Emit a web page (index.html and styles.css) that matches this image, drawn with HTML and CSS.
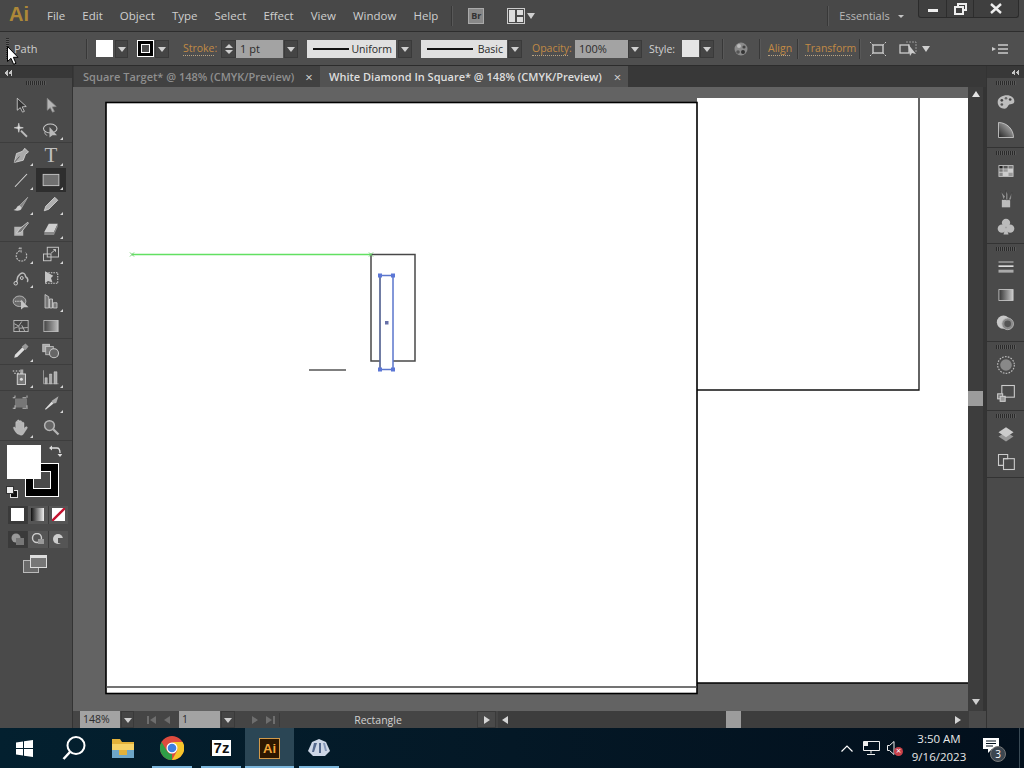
FILE: index.html
```html
<!DOCTYPE html>
<html lang="en">
<head>
    <meta charset="UTF-8">
    <title>White Diamond In Square* @ 148% (CMYK/Preview)</title>
    <link rel="stylesheet" href="styles.css">
</head>
<body>
<div class="app">
    <header class="menubar">
        <span class="ai-logo">Ai</span>
        <nav class="menu">
            <span>File</span><span>Edit</span><span>Object</span><span>Type</span><span>Select</span><span>Effect</span><span>View</span><span>Window</span><span>Help</span>
        </nav>
        <i class="vsep menu-sep"></i>
        <span class="br-icon">Br</span>
        <svg class="arrange-icon" width="18" height="16" viewBox="0 0 18 16"><rect x=".5" y=".5" width="17" height="15" fill="#4a4a4a" stroke="#ccc"/><path d="M2 2h6v12H2zM10 2h6v5h-6zM10 9h6v5h-6z" fill="#ddd"/></svg>
        <i class="tri arrange-tri"></i>
        <i class="vsep essentials-sep"></i>
        <span class="essentials">Essentials</span>
        <i class="tri-small"></i>
        <div class="window-btns">
            <span class="win-btn win-min"><i></i></span>
            <span class="win-btn win-max"><svg width="13" height="12" viewBox="0 0 13 12"><path d="M4 3V1h8v6h-3M1 4h8v7H1z" fill="none" stroke="#eee" stroke-width="2"/></svg></span>
            <span class="win-btn win-close"><svg width="12" height="11" viewBox="0 0 12 11"><path d="M1 1l10 9M11 1L1 10" stroke="#eee" stroke-width="2.4"/></svg></span>
        </div>
    </header>

    <div class="controlbar">
        <i class="grip-v"></i>
        <span class="path-label">Path</span>
        <i class="vsep"></i>
        <span class="swatch fill-swatch"></span>
        <span class="dd dd-fill"></span>
        <span class="stroke-swatch"><i></i></span>
        <span class="dd dd-stroke"></span>
        <span class="link-label stroke-label">Stroke:</span>
        <span class="spinner"><i class="up"></i><i class="down"></i></span>
        <span class="input stroke-input">1 pt</span>
        <span class="dd dd-weight"></span>
        <span class="line-box uniform-box"><i class="line-sample"></i>Uniform</span>
        <span class="dd dd-uniform"></span>
        <span class="line-box basic-box"><i class="line-sample"></i>Basic</span>
        <span class="dd dd-basic"></span>
        <span class="link-label opacity-label">Opacity:</span>
        <span class="input opacity-input">100%</span>
        <span class="dd dd-opacity"></span>
        <span class="style-label">Style:</span>
        <span class="swatch style-swatch"></span>
        <span class="dd dd-style"></span>
        <i class="vsep sep-a"></i>
        <svg class="globe" width="14" height="14" viewBox="0 0 14 14"><circle cx="7" cy="7" r="6.5" fill="#8b8b8b"/><circle cx="5" cy="4" r="2" fill="#bbb"/><circle cx="10" cy="5" r="1.6" fill="#444"/><circle cx="4" cy="10" r="1.8" fill="#555"/><circle cx="9" cy="10" r="2" fill="#333"/></svg>
        <i class="vsep sep-b"></i>
        <span class="link-label align-label">Align</span>
        <i class="vsep sep-c"></i>
        <span class="link-label transform-label">Transform</span>
        <i class="vsep sep-c"></i>
        <svg class="iso-a" width="18" height="16" viewBox="0 0 18 16" fill="none" stroke="#ccc"><rect x="4" y="4" width="10" height="8" stroke-width="1.4"/><path d="M1 1l3 3M17 1l-3 3M1 15l3-3M17 15l-3-3" stroke-dasharray="1.5 1"/></svg>
        <svg class="iso-b" width="18" height="16" viewBox="0 0 18 16"><rect x="1" y="4" width="9" height="8" fill="none" stroke="#ccc" stroke-width="1.3"/><path d="M7 1h10v10" fill="none" stroke="#999" stroke-dasharray="2 1"/><path d="M9 3l2 12 2-3 4 1z" fill="#ccc"/></svg>
        <i class="tri iso-tri"></i>
        <svg class="panel-menu" width="16" height="10" viewBox="0 0 16 10"><path d="M0 3l4 2-4 2z" fill="#ccc"/><path d="M6 1h10M6 5h10M6 9h10" stroke="#ccc" stroke-width="1.4"/></svg>
    </div>

    <div class="workspace">
        <aside class="toolbar">
            <div class="collapse-strip"><span class="chevrons"></span></div>
            <div class="grip-h"></div>
            <div class="tool-group first">
                <span class="tool"><svg viewBox="0 0 24 24"><path d="M7 3v16l4-3.5 3 6 2.5-1-3-6 5.5-.5z" fill="#333" stroke="#ddd"/></svg></span>
                <span class="tool"><svg viewBox="0 0 24 24"><path d="M7 3v16l4-3.5 3 6 2.5-1-3-6 5.5-.5z" fill="#b5b5b5" stroke="#888"/></svg></span>
                <span class="tool"><svg viewBox="0 0 24 24"><path d="M12 13l8 8" stroke="#bbb" stroke-width="2.4"/><path d="M9 3l1 5 5 1-5 1-1 5-1-5-5-1 5-1z" fill="#e2e2e2" stroke="#ccc"/></svg></span>
                <span class="tool more"><svg viewBox="0 0 24 24"><ellipse cx="11" cy="10" rx="9" ry="6" fill="none" stroke="#ccc" stroke-width="1.4"/><path d="M4 14c-1 3 1 5 3 5" fill="none" stroke="#ccc"/><path d="M10 8v14l4-3h6z" fill="#b9b9b9"/></svg></span>
            </div>
            <div class="tool-group">
                <span class="tool more"><svg viewBox="0 0 24 24"><path d="M17 3l5 5-4 3-3 8-12 3 3-12 8-3z" fill="#aaa" stroke="#ddd"/><path d="M3 22l7-8" stroke="#444"/></svg></span>
                <span class="tool more"><span class="type-t">T</span></span>
                <span class="tool more"><svg viewBox="0 0 24 24"><path d="M4 21L20 4" stroke="#d8d8d8" stroke-width="1.4"/></svg></span>
                <span class="tool more active"><svg viewBox="0 0 24 24"><rect x="1.500" y="4.500" width="21" height="15" fill="#707070" stroke="#c8c8c8" stroke-width="1.200"/></svg></span>
                <span class="tool more"><svg viewBox="0 0 24 24"><path d="M21 3L10 14l3 3z" fill="#888" stroke="#aaa"/><path d="M10 14c-4 0-3 5-8 6 5 2 11 1 11-3z" fill="#ccc"/></svg></span>
                <span class="tool more"><svg viewBox="0 0 24 24"><path d="M17 3l4 4L9 19l-6 2 2-6z" fill="#b0b0b0" stroke="#ddd"/></svg></span>
                <span class="tool"><svg viewBox="0 0 24 24"><path d="M3 9h12v12H3z" fill="#b5b5b5"/><path d="M21 3L11 11c-2 2-3 5-5 6 4 1 7-1 8-3l8-10z" fill="#777" stroke="#ddd"/></svg></span>
                <span class="tool more"><svg viewBox="0 0 24 24"><path d="M9 5h12l-5 11H3z" fill="#cfcfcf"/><path d="M3 16h13v4H3zM16 16l5-11v4l-5 11z" fill="#888"/></svg></span>
            </div>
            <div class="tool-group">
                <span class="tool more"><svg viewBox="0 0 24 24"><path d="M9 5l3-2v6l-2-1a7 7 0 1 0 8 2" fill="none" stroke="#bbb" stroke-width="1.6" stroke-dasharray="2.4 1.4"/></svg></span>
                <span class="tool more"><svg viewBox="0 0 24 24" fill="none" stroke="#ccc" stroke-width="1.2"><rect x="2" y="12" width="10" height="9"/><rect x="7" y="3" width="15" height="13"/><path d="M12 11l6-5M15 6h3v3"/></svg></span>
                <span class="tool more"><svg viewBox="0 0 24 24"><path d="M5 18c3-2 1-5 3-8s5-6 8-4 1 4 3 5 3 5 1 6" fill="none" stroke="#bbb" stroke-width="2"/><circle cx="5" cy="19" r="2.4" fill="#555" stroke="#eee"/><circle cx="13" cy="12" r="2" fill="#555" stroke="#eee"/></svg></span>
                <span class="tool"><svg viewBox="0 0 24 24"><rect x="5" y="5" width="16" height="14" fill="none" stroke="#ccc" stroke-dasharray="2 1.4" stroke-width="1.4"/><path d="M4 3v16l4-3 6 2-2-6 3-3z" fill="#c4c4c4"/></svg></span>
                <span class="tool"><svg viewBox="0 0 24 24"><ellipse cx="10" cy="11" rx="8.5" ry="7" fill="#6a6a6a" stroke="#ccc"/><path d="M4 11h10" stroke="#eee" stroke-dasharray="2 1"/><path d="M12 9v13l4-3h6z" fill="#c4c4c4"/></svg></span>
                <span class="tool more"><svg viewBox="0 0 24 24"><path d="M4 2l5 3v15H4zM10 8h4v12h-4zM15 13h5v7h-5z" fill="#777" stroke="#d5d5d5"/></svg></span>
                <span class="tool"><svg viewBox="0 0 24 24" fill="none" stroke="#d0d0d0"><rect x="2.5" y="4.5" width="19" height="15" fill="#444"/><path d="M3 9l6 3 4-6M9 12l1 7M10 15l11-1M13 11l4 8M3 15l5-2"/></svg></span>
                <span class="tool"><svg viewBox="0 0 24 24"><defs><linearGradient id="g1"><stop offset="0" stop-color="#444"/><stop offset="1" stop-color="#bbb"/></linearGradient></defs><rect x="2.5" y="4.5" width="19" height="15" fill="url(#g1)" stroke="#c8c8c8"/></svg></span>
            </div>
            <div class="tool-group">
                <span class="tool more"><svg viewBox="0 0 24 24"><path d="M3 21l1-4L14 7l3 3L7 20z" fill="#ddd"/><path d="M13 6l5-4 4 4-4 5z" fill="#999"/></svg></span>
                <span class="tool"><svg viewBox="0 0 24 24"><rect x="1" y="3" width="9" height="10" fill="#aaa" stroke="#ccc"/><rect x="5" y="6" width="10" height="11" fill="#777" stroke="#ccc"/><circle cx="16" cy="15" r="6" fill="#666" stroke="#ccc" stroke-width="1.4"/></svg></span>
            </div>
            <div class="tool-group">
                <span class="tool more"><svg viewBox="0 0 24 24"><path d="M1 4h2M5 4h2M9 4h2M3 7h2M7 7h2M11 7h2" stroke="#ddd" stroke-width="1.6"/><path d="M11 2h4v6h-4z" fill="#aaa"/><rect x="7" y="8" width="11" height="14" fill="#777" stroke="#ddd" stroke-width="1.2"/><circle cx="12.5" cy="15" r="2" fill="#ddd"/></svg></span>
                <span class="tool more"><svg viewBox="0 0 24 24"><path d="M2 3v18h20" fill="none" stroke="#aaa"/><path d="M4 13h3v8H4zM10 8h3v13h-3zM16 5h4v16h-4z" fill="#aaa" stroke="#ddd" stroke-width=".6"/></svg></span>
            </div>
            <div class="tool-group">
                <span class="tool"><svg viewBox="0 0 24 24"><rect x="4" y="6" width="16" height="12" fill="#777"/><path d="M1 5h21M1 19h21M4 2v20M20 2v20" stroke="#ddd" stroke-dasharray="5 10" stroke-dashoffset="2"/></svg></span>
                <span class="tool more"><svg viewBox="0 0 24 24"><path d="M22 3l-3 9-5 1-1-4z" fill="#aaa"/><path d="M13 10l-9 10 1 1 10-8z" fill="#ddd"/></svg></span>
                <span class="tool more"><svg viewBox="0 0 24 24"><path d="M7 21c-2-2-5-6-5-8s2-1 3 1V6c0-2 2-2 2 0V4c0-2 3-2 3 0v1c0-2 3-2 3 0v2c0-2 3-2 3 0v7l2-2c2-1 3 0 2 2l-4 6c-1 2-2 3-4 3z" fill="#b5b5b5" stroke="#ddd" stroke-width=".5"/></svg></span>
                <span class="tool"><svg viewBox="0 0 24 24"><circle cx="10" cy="10" r="6.5" fill="#666" stroke="#b5b5b5" stroke-width="2"/><path d="M15 15l7 7" stroke="#b5b5b5" stroke-width="3"/></svg></span>
            </div>
            <div class="fill-stroke">
                <span class="big-stroke"><i></i></span>
                <span class="big-fill"></span>
                <svg class="swap" width="14" height="14" viewBox="0 0 14 14" fill="none" stroke="#ddd" stroke-width="1.3"><path d="M3 4h6c2 0 3 2 3 5"/><path d="M1 4l3-2.500v5zM12 13l-2.500-3h5z" fill="#ddd" stroke="none"/></svg>
                <svg class="defaults" width="12" height="12" viewBox="0 0 12 12"><rect x="4.500" y="4.500" width="7" height="7" fill="#111" stroke="#ddd"/><rect x=".5" y=".5" width="7" height="7" fill="#eee" stroke="#333"/></svg>
            </div>
            <div class="color-row">
                <span class="mode-btn on"><i class="mode-white"></i></span>
                <span class="mode-btn"><i class="mode-grad"></i></span>
                <span class="mode-btn"><svg width="13" height="13" viewBox="0 0 13 13"><rect width="13" height="13" fill="#fff"/><path d="M0 13L13 0" stroke="#c4122f" stroke-width="2.400"/></svg></span>
            </div>
            <div class="draw-row">
                <span class="draw-btn on"><svg width="14" height="12" viewBox="0 0 14 12"><circle cx="5" cy="5" r="4.500" fill="#999"/><rect x="5" y="5" width="8" height="7" fill="#777"/></svg></span>
                <span class="draw-btn"><svg width="14" height="12" viewBox="0 0 14 12"><circle cx="6" cy="5" r="4.500" fill="none" stroke="#ccc" stroke-width="1.400"/><rect x="7" y="6" width="6" height="5" fill="#999"/></svg></span>
                <span class="draw-btn"><svg width="14" height="12" viewBox="0 0 14 12"><circle cx="7" cy="6" r="5" fill="#ccc"/><rect x="7" y="5" width="5" height="5" fill="#555"/></svg></span>
            </div>
            <div class="screen-mode">
                <svg width="24" height="18" viewBox="0 0 24 18"><rect x=".5" y="5.500" width="15" height="12" fill="#6a6a6a" stroke="#bbb"/><rect x="7.500" y=".5" width="16" height="12" fill="#777" stroke="#ddd"/><path d="M8 1h15v2H8z" fill="#ddd"/></svg>
            </div>
        </aside>

        <main class="document">
            <div class="tabs">
                <div class="tab tab-back"><span>Square Target* @ 148% (CMYK/Preview)</span><b class="tab-x">&times;</b></div>
                <div class="tab tab-front"><span>White Diamond In Square* @ 148% (CMYK/Preview)</span><b class="tab-x">&times;</b></div>
            </div>
            <div class="canvas-row">
                <svg class="canvas" viewBox="73 87 895 624" width="895" height="624">
                    <rect x="697" y="98" width="271" height="585" fill="#fff"/>
                    <path d="M697 683H968" stroke="#000" stroke-width="1.500"/>
                    <path d="M697 390H919V98" fill="none" stroke="#111" stroke-width="1.300"/>
                    <rect x="106" y="102.500" width="591" height="591" fill="#fff" stroke="#000" stroke-width="1.600"/>
                    <path d="M106 687H697" stroke="#444" stroke-width="1.500"/>
                    <path d="M371 254.500H415V361H371Z" fill="none" stroke="#484848" stroke-width="1.500"/>
                    <path d="M309 370H346" stroke="#555" stroke-width="1.400"/>
                    <rect x="380" y="275.500" width="13" height="94" fill="#fff" stroke="#5b76cc" stroke-width="1.500"/>
                    <path d="M380 276V369" stroke="#555" stroke-width=".8"/>
                    <path d="M132 254.500H371" stroke="#62e062" stroke-width="1.300"/>
                    <path d="M130 252.500l4 4M134 252.500l-4 4M369 252.500l4 4M373 252.500l-4 4" stroke="#6fcf6f"/>
                    <g fill="#5b76d6">
                        <rect x="378" y="273.500" width="4" height="4"/>
                        <rect x="391" y="273.500" width="4" height="4"/>
                        <rect x="378" y="367.500" width="4" height="4"/>
                        <rect x="391" y="367.500" width="4" height="4"/>
                        <rect x="385" y="321" width="3.500" height="3.500" fill="#6670a8"/>
                    </g>
                </svg>
                <div class="vscroll">
                    <i class="tri-up"></i>
                    <span class="vthumb"></span>
                    <i class="tri vscroll-down"></i>
                </div>
            </div>
            <div class="statusbar">
                <span class="input zoom-input">148%</span>
                <span class="dd dd-zoom"></span>
                <svg class="nav-first" width="28" height="10" viewBox="0 0 28 10" fill="#6e6e6e"><path d="M1 1h2v8H1zM10 1v8L4 5zM24 1v8l-6-4z"/></svg>
                <span class="input page-input">1</span>
                <span class="dd dd-page"></span>
                <svg class="nav-next" width="28" height="10" viewBox="0 0 28 10" fill="#6e6e6e"><path d="M4 1v8l6-4zM18 1v8l6-4zM25 1h2v8h-2z"/></svg>
                <span class="status-label">Rectangle</span>
                <span class="status-arrow"><i class="tri-right"></i></span>
                <div class="hscroll">
                    <i class="tri-left"></i>
                    <span class="hthumb"></span>
                    <i class="tri-right hscroll-right"></i>
                </div>
                <span class="scroll-corner"></span>
            </div>
        </main>

        <aside class="dock">
            <div class="collapse-strip dock-strip"><span class="chevrons"></span></div>
            <div class="dock-group">
                <div class="grip-h dock-grip"></div>
                <span class="dock-icon"><svg viewBox="0 0 24 24"><path d="M2 12c0-5 6-8 11-8s9 3 9 7-4 3-6 4-2 5-6 5-8-3-8-8z" fill="#bdbdbd"/><circle cx="7" cy="10" r="1.600" fill="#444"/><circle cx="12" cy="7.500" r="1.600" fill="#666"/><circle cx="17" cy="9" r="1.600" fill="#444"/><circle cx="7" cy="15" r="1.600" fill="#555"/></svg></span>
                <span class="dock-icon"><svg viewBox="0 0 24 24"><defs><linearGradient id="g2" x1="0" y1="1" x2="1" y2="0"><stop offset="0" stop-color="#222"/><stop offset="1" stop-color="#ccc"/></linearGradient></defs><path d="M3 3c10 0 18 8 18 18H3z" fill="url(#g2)" stroke="#ccc"/></svg></span>
            </div>
            <div class="dock-group">
                <div class="grip-h dock-grip"></div>
                <span class="dock-icon"><svg viewBox="0 0 24 24"><rect x="3" y="5" width="18" height="14" fill="#ccc"/><path d="M4 6h4v3H4z" fill="#222"/><path d="M9 6h5v3H9z" fill="#555"/><path d="M15 6h5v3h-5zM4 10h4v3H4z" fill="#777"/><path d="M9 10h5v3H9zM15 14h5v4h-5z" fill="#999"/><path d="M4 14h4v4H4z" fill="#888"/></svg></span>
                <span class="dock-icon"><svg viewBox="0 0 24 24"><path d="M7 13h10v9H7z" fill="#bbb"/><path d="M9 13L6 3l5 6zM12 13V2l2 4v7zM15 13l4-9-1 9z" fill="#999" stroke="#333" stroke-width=".5"/></svg></span>
                <span class="dock-icon"><svg viewBox="0 0 24 24"><circle cx="12" cy="7" r="5" fill="#bbb"/><circle cx="7" cy="14" r="5" fill="#bbb"/><circle cx="17" cy="14" r="5" fill="#bbb"/><path d="M11 14h2l2 7H9z" fill="#bbb"/></svg></span>
            </div>
            <div class="dock-group">
                <div class="grip-h dock-grip"></div>
                <span class="dock-icon"><svg viewBox="0 0 24 24"><path d="M3 6h18" stroke="#ddd"/><path d="M3 11h18" stroke="#ddd" stroke-width="2"/><path d="M3 17h18" stroke="#aaa" stroke-width="3.500"/></svg></span>
                <span class="dock-icon"><svg viewBox="0 0 24 24"><defs><linearGradient id="g3"><stop offset="0" stop-color="#333"/><stop offset="1" stop-color="#ccc"/></linearGradient></defs><rect x="3.500" y="5.500" width="17" height="13" fill="url(#g3)" stroke="#ccc"/></svg></span>
                <span class="dock-icon"><svg viewBox="0 0 24 24"><circle cx="9" cy="11" r="8" fill="#c8c8c8"/><circle cx="14" cy="13" r="7" fill="#888" stroke="#bbb"/><circle cx="14" cy="13" r="4" fill="#555"/></svg></span>
            </div>
            <div class="dock-group">
                <div class="grip-h dock-grip"></div>
                <span class="dock-icon"><svg viewBox="0 0 24 24"><circle cx="12" cy="12" r="10" fill="none" stroke="#bbb" stroke-dasharray="2 1.500" stroke-width="1.400"/><circle cx="12" cy="12" r="7" fill="#888"/></svg></span>
                <span class="dock-icon"><svg viewBox="0 0 24 24" fill="none" stroke="#ccc" stroke-width="1.300"><rect x="7" y="3" width="15" height="14"/><rect x="2" y="13" width="6" height="6" fill="#777"/><rect x="5" y="16" width="6" height="6" fill="#999"/></svg></span>
            </div>
            <div class="dock-group">
                <div class="grip-h dock-grip"></div>
                <span class="dock-icon"><svg viewBox="0 0 24 24"><path d="M3 15l9-5 9 5-9 6z" fill="#999"/><path d="M3 10l9-6 9 6-9 6z" fill="#ccc"/></svg></span>
                <span class="dock-icon"><svg viewBox="0 0 24 24" fill="none" stroke="#ccc" stroke-width="1.300"><path d="M3 3h11v5H9v8H3z"/><rect x="9" y="8" width="13" height="13"/></svg></span>
            </div>
        </aside>
    </div>

    <footer class="taskbar">
        <span class="task-item"><svg width="17" height="17" viewBox="0 0 17 17" fill="#fff"><path d="M0 2.500l7-1v6.500H0zM8 1.300l9-1.300v8H8zM0 9h7v6.500l-7-1zM8 9h9v8l-9-1.300z"/></svg></span>
        <span class="task-item"><svg width="24" height="24" viewBox="0 0 24 24" fill="none" stroke="#fff"><circle cx="14" cy="9.500" r="8.500" stroke-width="2"/><path d="M8 16L1.500 23" stroke-width="2.500"/></svg></span>
        <span class="task-item"><svg width="22" height="20" viewBox="0 0 22 20"><path d="M0 1h8l2 3h12v16H0z" fill="#e3b23a"/><path d="M0 6h22v14H0z" fill="#f6d267"/><path d="M0 12h22v8H0z" fill="#6ea7c8"/><rect x="7" y="12" width="8" height="5" fill="#e3b23a"/></svg></span>
        <span class="task-item running"><svg width="24" height="24" viewBox="0 0 24 24"><circle cx="12" cy="12" r="12" fill="#dd4b3e"/><path d="M12 24A12 12 0 0 1 1.600 6L7 15c1 2 3 3 5 3z" fill="#2f9e47"/><path d="M12 6h10.600A12 12 0 0 1 12 24l5-9c1-3 0-7-5-9z" fill="#f7c52b"/><circle cx="12" cy="12" r="5.500" fill="#fff"/><circle cx="12" cy="12" r="4.300" fill="#3f7fe0"/></svg></span>
        <span class="task-item running"><span class="sevenz">7z</span></span>
        <span class="task-item running current"><span class="ai-box">Ai</span></span>
        <span class="task-item running"><svg width="22" height="18" viewBox="0 0 22 18"><path d="M4 3l7-3 7 3 4 9-5 5H5l-5-5z" fill="#cdd6e6"/><path d="M6 4h3l-3 9H4zM11 4h2v10h-2z" fill="#54688c"/><path d="M15 4h2l2 8h-2z" fill="#8497b8"/></svg></span>
        <div class="tray">
            <svg width="12" height="7" viewBox="0 0 12 7" fill="none" stroke="#fff" stroke-width="1.200"><path d="M.5 6.500L6 1l5.500 5.500"/></svg>
            <svg class="tray-net" width="17" height="14" viewBox="0 0 17 14" fill="none" stroke="#eee"><path d="M.5.500h16v9H.5zM8 9.500v3M4 13.500h8"/><rect x="1.500" y="1.500" width="3" height="3" fill="#eee"/></svg>
            <span class="tray-vol"><svg width="10" height="14" viewBox="0 0 10 14" fill="none" stroke="#eee"><path d="M.5 4.500h2L7 .5v13l-4.500-4h-2z"/></svg><i class="vol-x">&times;</i></span>
            <div class="clock"><span>3:50 AM</span><span>9/16/2023</span></div>
            <span class="notify"><svg width="16" height="15" viewBox="0 0 16 15"><path d="M0 0h16v11H9l-4 4v-4H0z" fill="#fff"/><path d="M3 3h10M3 5.500h10M3 8h7" stroke="#04131f"/></svg><i class="notify-badge">3</i></span>
        </div>
    </footer>
    <svg class="cursor" width="12" height="19" viewBox="0 0 12 19"><path d="M.5.500v15l3.500-3.200 2.600 6 2.400-1-2.600-6h4.600z" fill="#fff" stroke="#000"/></svg>
</div>
</body>
</html>
```

FILE: styles.css
```css
* {
    box-sizing: border-box;
}

body {
    margin: 0;
    background: #4a4a4a;
    font-family: "Open Sans", "Noto Sans", sans-serif;
    font-size: 11px;
    color: #d2d2d2;
    overflow: hidden;
}

i {
    font-style: normal;
}

.app {
    position: relative;
    width: 1024px;
    height: 768px;
    display: flex;
    flex-direction: column;
}

/* top menu */
.menubar {
    height: 32px;
    display: flex;
    align-items: center;
    background: #484848;
    border-bottom: 1px solid #2e2e2e;
    flex: none;
}

.ai-logo {
    width: 47px;
    padding-left: 9px;
    font-family: "Liberation Sans", sans-serif;
    font-size: 20px;
    font-weight: 700;
    color: #ad8838;
    line-height: 1;
    margin-top: -4px;
    flex: none;
}

.menu {
    display: flex;
    gap: 17.1px;
    font-size: 11.5px;
    color: #cfcfcf;
    flex: none;
}

.vsep {
    display: block;
    width: 1px;
    height: 20px;
    background: #383838;
    border-right: 1px solid #585858;
    box-sizing: content-box;
    flex: none;
}

.menu-sep {
    margin-left: 13px;
}

.br-icon {
    width: 16px;
    height: 16px;
    margin-left: 15px;
    background: #888;
    border: 1px solid #aaa;
    color: #333;
    font-size: 9px;
    font-weight: 700;
    text-align: center;
    line-height: 14px;
    flex: none;
}

.arrange-icon {
    margin-left: 23px;
    flex: none;
}

.tri {
    display: block;
    width: 0;
    height: 0;
    border-left: 4px solid transparent;
    border-right: 4px solid transparent;
    border-top: 6px solid #cfcfcf;
    flex: none;
}

.arrange-tri {
    margin-left: 2px;
}

.essentials-sep {
    margin-left: 292px;
}

.essentials {
    width: 50px;
    margin-left: 10px;
    font-size: 11px;
    color: #b9b9b9;
    white-space: nowrap;
    flex: none;
}

.tri-small {
    width: 0;
    height: 0;
    margin: 2px 0 0 9px;
    border-left: 3px solid transparent;
    border-right: 3px solid transparent;
    border-top: 3px solid #c4c4c4;
    flex: none;
}

.window-btns {
    display: flex;
    align-self: flex-start;
    height: 18px;
    margin-left: 14px;
    background: #3f3f3f;
    border: 1px solid #2b2b2b;
    border-top: 0;
    border-radius: 0 0 3px 3px;
    flex: none;
}

.win-btn {
    display: flex;
    align-items: center;
    justify-content: center;
    border-right: 1px solid #2d2d2d;
}

.win-min {
    width: 28px;
}

.win-min i {
    width: 10px;
    height: 3px;
    margin-top: 3px;
    background: #eee;
}

.win-max {
    width: 27px;
}

.win-close {
    width: 44px;
    border-right: 0;
}

/* control bar */
.controlbar {
    position: relative;
    height: 34px;
    display: flex;
    align-items: center;
    padding-left: 6px;
    background: #4f4f4f;
    border-bottom: 1px solid #2c2c2c;
    flex: none;
}

.grip-v {
    width: 3px;
    height: 22px;
    background: repeating-linear-gradient(#2a2a2a 0 1px, #5c5c5c 1px 2px);
}

.path-label {
    width: 72px;
    margin-left: 5px;
    color: #d0d0d0;
}

.swatch {
    width: 17px;
    height: 17px;
    background: #fff;
    flex: none;
}

.fill-swatch {
    margin-left: 8px;
}

.dd {
    position: relative;
    display: block;
    width: 14px;
    height: 18px;
    background: #454545;
    border: 1px solid #3a3a3a;
    flex: none;
}

.dd::after {
    content: "";
    position: absolute;
    left: 2px;
    top: 6px;
    border-left: 4px solid transparent;
    border-right: 4px solid transparent;
    border-top: 5px solid #cfcfcf;
}

.dd-fill {
    width: 13px;
    margin-left: 2px;
}

.stroke-swatch {
    width: 17px;
    height: 17px;
    margin-left: 9px;
    padding: 2px;
    background: #000;
    border: 1px solid #fff;
    flex: none;
}

.stroke-swatch i {
    display: block;
    width: 9px;
    height: 9px;
    margin: 1px;
    background: #4f4f4f;
    border: 1.5px solid #fff;
}

.dd-stroke,
.dd-weight,
.dd-basic,
.dd-style {
    margin-left: 1px;
}

.link-label {
    flex: none;
    color: #c18a45;
    border-bottom: 1px dotted #b9a383;
    line-height: 13px;
    white-space: nowrap;
    font-size: 10.5px;
}

.stroke-label {
    width: 31px;
    margin-left: 14px;
}

.spinner {
    width: 15px;
    height: 18px;
    margin-left: 7px;
    display: flex;
    flex-direction: column;
    align-items: center;
    justify-content: space-around;
    padding: 2px 0;
    background: #454545;
    border: 1px solid #3a3a3a;
    flex: none;
}

.spinner .up {
    border-left: 4px solid transparent;
    border-right: 4px solid transparent;
    border-bottom: 4px solid #ccc;
}

.spinner .down {
    border-left: 4px solid transparent;
    border-right: 4px solid transparent;
    border-top: 4px solid #ccc;
}

.input {
    height: 18px;
    padding-left: 4px;
    background: #a3a3a3;
    color: #2c2c2c;
    line-height: 18px;
    flex: none;
}

.stroke-input {
    width: 47px;
}

.line-box {
    height: 18px;
    display: flex;
    align-items: center;
    justify-content: space-between;
    padding: 0 4px 0 6px;
    background: #e0e0e0;
    color: #2a2a2a;
    font-size: 10.5px;
    flex: none;
}

.line-sample {
    display: block;
    height: 2px;
    background: #111;
}

.uniform-box {
    width: 89px;
    margin-left: 9px;
}

.uniform-box .line-sample {
    width: 36px;
}

.dd-uniform {
    margin-left: 2px;
}

.basic-box {
    width: 86px;
    margin-left: 9px;
}

.basic-box .line-sample {
    width: 46px;
}

.opacity-label {
    width: 36px;
    margin-left: 10px;
}

.opacity-input {
    width: 53px;
    margin-left: 7px;
}

.style-label {
    width: 25px;
    margin-left: 7px;
    font-size: 10.5px;
    flex: none;
}

.style-swatch {
    margin-left: 8px;
    background: #e4e4e4;
}

.sep-a {
    margin-left: 8px;
}

.globe {
    margin-left: 10px;
    flex: none;
}

.sep-b {
    margin-left: 11px;
}

.align-label {
    width: 22px;
    margin-left: 7px;
}

.sep-c {
    margin-left: 7px;
}

.transform-label {
    width: 47px;
    margin-left: 6px;
}

.iso-a {
    margin-left: 8px;
    flex: none;
}

.iso-b {
    margin-left: 12px;
    flex: none;
}

.iso-tri {
    margin-left: 5px;
}

.panel-menu {
    margin-left: auto;
    margin-right: 16px;
    flex: none;
}

/* main area */
.workspace {
    flex: 1;
    min-height: 0;
    display: flex;
}

.toolbar {
    width: 73px;
    background: #4a4a4a;
    border-right: 1px solid #333;
    flex: none;
}

.collapse-strip {
    height: 12px;
    display: flex;
    align-items: center;
    padding-left: 5px;
    background: #383838;
}

.chevrons {
    width: 7px;
    height: 7px;
    background: linear-gradient(135deg, transparent 50%, #c4c4c4 50%) 0 0 / 3px 4px no-repeat,
                linear-gradient(45deg, transparent 50%, #c4c4c4 50%) 0 4px / 3px 3px no-repeat,
                linear-gradient(135deg, transparent 50%, #c4c4c4 50%) 4px 0 / 3px 4px no-repeat,
                linear-gradient(45deg, transparent 50%, #c4c4c4 50%) 4px 4px / 3px 3px no-repeat;
}

.grip-h {
    height: 10px;
    background: repeating-linear-gradient(90deg, #2a2a2a 0 1px, #5a5a5a 1px 2px) center / 20px 4px no-repeat;
}

.tool-group {
    display: grid;
    grid-template-columns: 30px 30px;
    grid-auto-rows: 24.5px;
    padding: 0 6px;
    border-bottom: 1px solid #3d3d3d;
}

.tool-group.first {
    margin-top: 5px;
}

.tool-group:nth-child(5) {
    grid-auto-rows: 24px;
}

.tool-group:nth-child(7) {
    grid-auto-rows: 25px;
}

.tool {
    position: relative;
    display: flex;
    align-items: center;
    justify-content: center;
}

.tool svg {
    width: 18px;
    height: 18px;
}

.tool.more::after {
    content: "";
    position: absolute;
    right: 3px;
    bottom: 2px;
    border-left: 3px solid transparent;
    border-bottom: 3px solid #d5d5d5;
}

.tool.active {
    background: #2e2e2e;
}

.type-t {
    font-family: "Liberation Serif", serif;
    font-size: 21px;
    line-height: 20px;
    color: #c0c0c0;
}

.fill-stroke {
    position: relative;
    height: 65px;
}

.big-fill {
    position: absolute;
    left: 7px;
    top: 4px;
    width: 34px;
    height: 34px;
    background: #fff;
}

.big-stroke {
    position: absolute;
    left: 25px;
    top: 22px;
    width: 34px;
    height: 34px;
    padding: 7px;
    background: #000;
    border: 1px solid #fff;
}

.big-stroke i {
    display: block;
    width: 18px;
    height: 18px;
    background: #4a4a4a;
    border: 1px solid #fff;
}

.swap {
    position: absolute;
    left: 48px;
    top: 3px;
}

.defaults {
    position: absolute;
    left: 6px;
    top: 45px;
}

.color-row,
.draw-row {
    display: flex;
    gap: 1px;
    margin-left: 8px;
    width: 60px;
    background: #3c3c3c;
}

.color-row {
    height: 18px;
}

.draw-row {
    height: 17px;
    margin-top: 7px;
}

.mode-btn,
.draw-btn {
    display: flex;
    align-items: center;
    justify-content: center;
    flex: 1;
    background: #555;
}

.mode-btn.on,
.draw-btn.on {
    background: #3a3a3a;
}

.mode-btn i {
    display: block;
    width: 13px;
    height: 13px;
}

.mode-white {
    background: #fff;
}

.mode-grad {
    background: linear-gradient(90deg, #111, #eee);
}

.screen-mode {
    display: flex;
    justify-content: center;
    margin: 7px 3px 0 0;
}

/* document */
.document {
    width: 913px;
    display: flex;
    flex-direction: column;
    flex: none;
}

.tabs {
    height: 21px;
    display: flex;
    padding-left: 1px;
    background: #383838;
    flex: none;
}

.tab {
    display: flex;
    align-items: center;
    font-weight: 600;
    font-size: 11px;
    white-space: nowrap;
}

.tab-back {
    width: 246px;
    padding-left: 9px;
    background: #414141;
    color: #8f8f8f;
}

.tab-front {
    width: 308px;
    padding-left: 9px;
    background: #525252;
    color: #dedede;
}

.tab-x {
    margin-left: 11px;
    color: #d5d5d5;
    font-size: 13px;
    font-weight: 400;
}

.tab-front .tab-x {
    margin-left: 12px;
}

.canvas-row {
    height: 624px;
    display: flex;
    flex: none;
}

.canvas {
    display: block;
    background: #636363;
    flex: none;
}

.vscroll {
    width: 18px;
    display: flex;
    flex-direction: column;
    align-items: flex-start;
    background: #3d3d3d;
    border-right: 3px solid #343434;
}

.tri-up {
    margin: 4px 0 0 4px;
    border-left: 4px solid transparent;
    border-right: 4px solid transparent;
    border-bottom: 6px solid #e4e4e4;
}

.vthumb {
    width: 15px;
    height: 15px;
    margin-top: 294px;
    background: #9c9c9c;
}

.vscroll-down {
    margin: auto 0 6px 4px;
}

.statusbar {
    height: 17px;
    display: flex;
    align-items: center;
    padding-left: 7px;
    background: #454545;
    flex: none;
}

.statusbar .input {
    height: 17px;
    line-height: 17px;
    padding-left: 3px;
    font-size: 10.5px;
}

.zoom-input {
    width: 40px;
}

.statusbar .dd {
    height: 17px;
}

.dd-zoom {
    width: 13px;
    margin-left: 1px;
}

.nav-first {
    margin-left: 12px;
    flex: none;
}

.page-input {
    width: 41px;
    margin-left: 5px;
}

.dd-page {
    margin-left: 1px;
}

.nav-next {
    margin-left: 13px;
    flex: none;
}

.status-label {
    width: 198px;
    margin-left: 3px;
    padding-right: 1px;
    text-align: center;
    border-left: 1px solid #3a3a3a;
    font-size: 10.5px;
    color: #d2d2d2;
    flex: none;
}

.status-arrow {
    width: 19px;
    height: 17px;
    display: flex;
    align-items: center;
    justify-content: center;
    background: #4a4a4a;
    border: 1px solid #3a3a3a;
    flex: none;
}

.tri-right {
    display: block;
    border-top: 4px solid transparent;
    border-bottom: 4px solid transparent;
    border-left: 6px solid #d5d5d5;
}

.tri-left {
    display: block;
    margin-left: 4px;
    border-top: 4px solid transparent;
    border-bottom: 4px solid transparent;
    border-right: 6px solid #d5d5d5;
}

.hscroll {
    width: 471px;
    height: 17px;
    display: flex;
    align-items: center;
    margin-left: 2px;
    background: #3d3d3d;
    flex: none;
}

.hthumb {
    width: 15px;
    height: 17px;
    margin-left: 218px;
    background: #9c9c9c;
}

.hscroll-right {
    margin-left: auto;
    margin-right: 8px;
}

.scroll-corner {
    flex: 1;
    height: 17px;
    background: #4a4a4a;
}

/* right dock */
.dock {
    flex: 1;
    background: #4a4a4a;
    border-left: 1px solid #333;
}

.dock-strip {
    justify-content: flex-end;
    padding-right: 5px;
}

.dock-group {
    display: flex;
    flex-direction: column;
    align-items: center;
    padding-bottom: 3px;
    border-bottom: 1px solid #333;
}

.dock-group:nth-child(3) {
    padding-bottom: 2px;
}

.dock-group:nth-child(4) {
    padding-bottom: 4px;
}

.dock-group:nth-child(6) {
    padding-bottom: 1px;
}

.dock-grip {
    width: 100%;
    height: 9px;
}

.dock-group:nth-child(2) .dock-grip {
    height: 10px;
}

.dock-icon {
    width: 36px;
    height: 28px;
    display: flex;
    align-items: center;
    justify-content: center;
}

.dock-icon svg {
    width: 20px;
    height: 20px;
}

/* taskbar */
.taskbar {
    height: 40px;
    display: flex;
    background: linear-gradient(90deg, #03202f, #041826 50%, #020f1c);
    flex: none;
}

.task-item {
    position: relative;
    width: 49px;
    display: flex;
    align-items: center;
    justify-content: center;
}

.running::after {
    content: "";
    position: absolute;
    left: 5px;
    right: 4px;
    bottom: 0;
    height: 2px;
    background: #7cb6dc;
}

.current {
    background: #2b4655;
}

.current::after {
    left: 0;
    right: 0;
}

.sevenz {
    width: 21px;
    height: 16px;
    background: #fff;
    color: #111;
    font-family: "Liberation Sans", sans-serif;
    font-size: 15px;
    font-weight: 700;
    line-height: 16px;
    text-align: center;
    border-left: 2px solid #111;
}

.ai-box {
    width: 21px;
    height: 21px;
    background: #2d1700;
    border: 1px solid #d29a4a;
    color: #f2a93c;
    font-family: "Liberation Sans", sans-serif;
    font-size: 13px;
    font-weight: 700;
    line-height: 19px;
    text-align: center;
}

.tray {
    margin-left: auto;
    margin-right: 4px;
    width: 179px;
    height: 40px;
    display: flex;
    align-items: center;
    border-right: 1px solid #3a4a55;
    flex: none;
}

.tray-net {
    margin-left: 10px;
}

.tray-vol {
    position: relative;
    width: 16px;
    height: 14px;
    margin-left: 7px;
    display: flex;
}

.vol-x {
    position: absolute;
    left: 7px;
    top: 6px;
    width: 9px;
    height: 9px;
    border-radius: 50%;
    background: #c8404a;
    color: #fff;
    font-size: 9px;
    line-height: 8px;
    text-align: center;
}

.clock {
    width: 66px;
    margin-left: 3px;
    display: flex;
    flex-direction: column;
    align-items: center;
    gap: 2px;
    font-size: 11.5px;
    line-height: 16px;
    color: #e8e8e8;
    flex: none;
}

.notify {
    position: relative;
    width: 18px;
    height: 20px;
    margin-left: 11px;
    flex: none;
}

.notify-badge {
    position: absolute;
    left: 7px;
    top: 8px;
    width: 16px;
    height: 16px;
    border-radius: 50%;
    background: #3c4650;
    border: 1px solid #777;
    color: #fff;
    font-size: 10px;
    line-height: 14px;
    text-align: center;
}

.cursor {
    position: absolute;
    left: 7px;
    top: 46px;
}
```
